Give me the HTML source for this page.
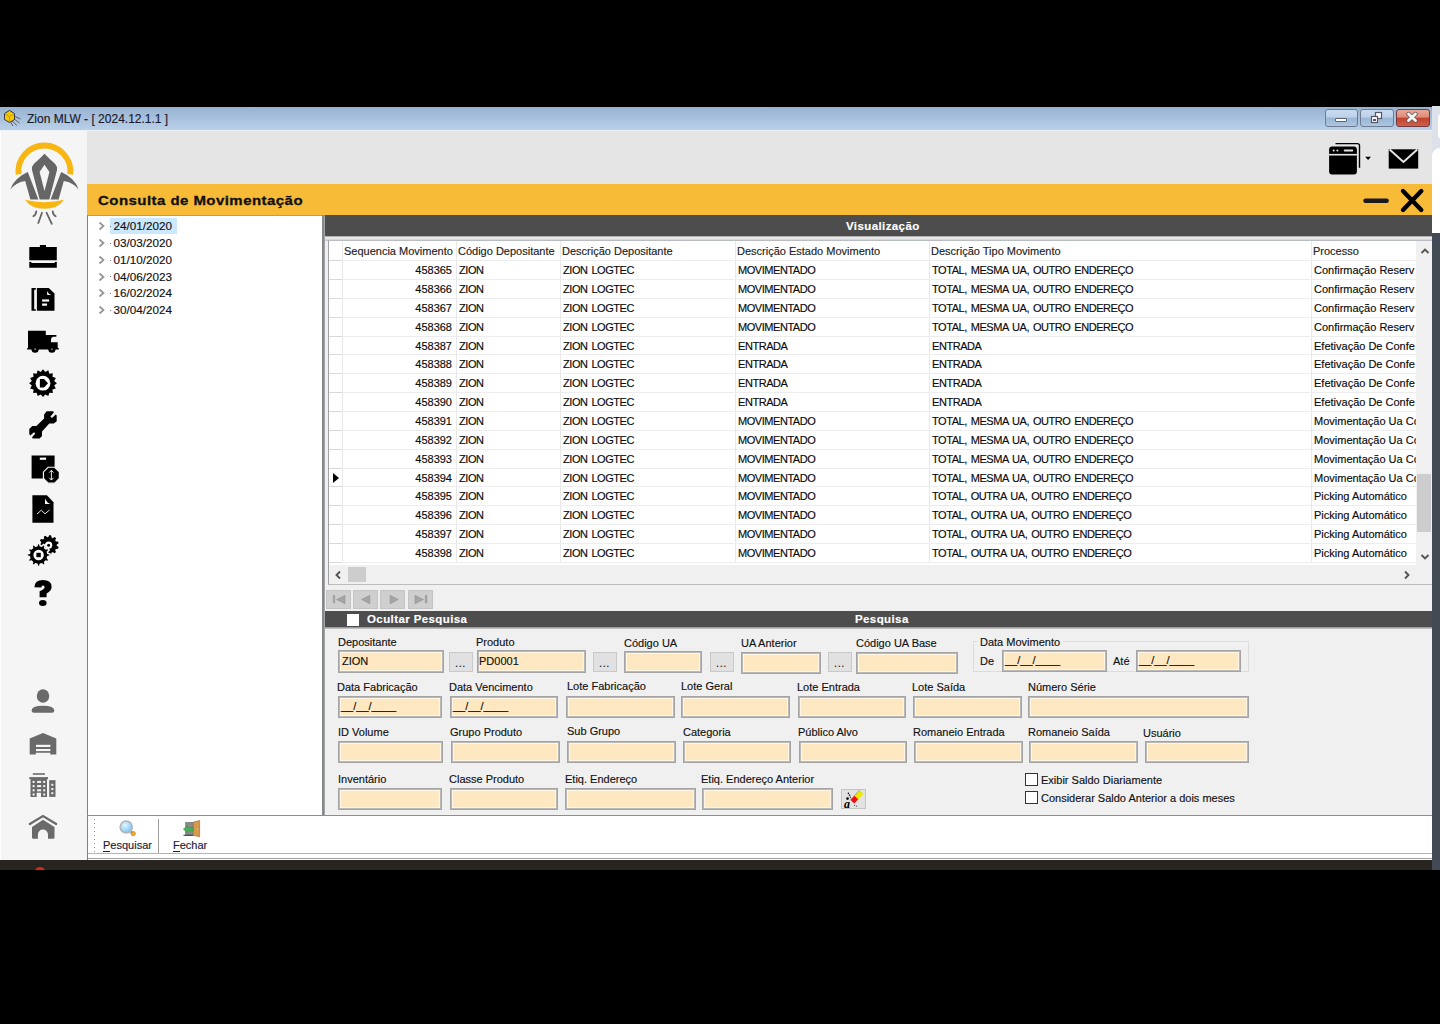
<!DOCTYPE html><html><head><meta charset="utf-8"><style>

*{margin:0;padding:0;box-sizing:border-box}
html,body{width:1440px;height:1024px;overflow:hidden;background:#000}
body{position:relative;font-family:"Liberation Sans", sans-serif;font-size:11px;color:#1e1e1e}
.ab{position:absolute}
.t{position:absolute;white-space:nowrap;line-height:13px;-webkit-text-stroke:0.15px currentColor}
.inp{position:absolute;background:#fde8c2;border:1px solid #a4a4a4;box-shadow:inset 0 0 0 1px #b9b9b9, inset 0 0 0 2px #fff6e6}
.btn{position:absolute;background:#e1e1e1;border:1px solid #c9c9c9;}
.dots{position:absolute;left:5px;top:6px;font-size:11px;letter-spacing:0.5px}
.mask{position:absolute;left:5px;top:4px;font-size:11px;letter-spacing:-0.6px;}
.hl{position:absolute;height:1px;background:#efefef}
.vl{position:absolute;width:1px;background:#e6e6e6}
.cell{position:absolute;white-space:nowrap;line-height:13px;color:#0a0a0a;-webkit-text-stroke:0.15px currentColor}
.up{letter-spacing:-0.45px;word-spacing:1.3px}

</style></head><body>
<div class="ab" style="left:0;top:107px;width:1432px;height:23px;background:linear-gradient(#97b2d2,#b9d0e8)"></div>
<div class="ab" style="left:0;top:130px;width:1432px;height:1px;background:#eef2f7"></div>
<div class="t" style="left:27px;top:112px;font-size:12px;line-height:15px;color:#1a1a2a">Zion MLW - [ 2024.12.1.1 ]</div>
<svg class="ab" style="left:2px;top:109px" width="20" height="18" viewBox="0 0 20 18"><path d="M12 7 L18.5 10 M11.5 9.5 L17.5 14 M9.5 11.5 L15 16.5 M8 12 L11 17" stroke="#555" stroke-width="0.9"/><path d="M2.5 4.5 L7.5 1.5 L12.5 4.5 L12.5 10.5 L7.5 13.5 L2.5 10.5Z" fill="#f6c800" stroke="#3a3a3a" stroke-width="1"/><path d="M2.5 4.5 L7.5 7.5 L12.5 4.5 M7.5 7.5 V13.5" stroke="#b08800" stroke-width="0.8" fill="none"/></svg>
<div class="ab" style="left:1325px;top:109px;width:33px;height:18px;background:linear-gradient(#c9dbef 0%,#bcd1ea 45%,#9ab6d3 50%,#adc6e2 100%);border:1px solid #6c7b92;border-radius:3px"></div>
<div class="ab" style="left:1360px;top:109px;width:34px;height:18px;background:linear-gradient(#c9dbef 0%,#bcd1ea 45%,#9ab6d3 50%,#adc6e2 100%);border:1px solid #6c7b92;border-radius:3px"></div>
<div class="ab" style="left:1396px;top:109px;width:34px;height:18px;background:linear-gradient(#e9a898 0%,#df8c78 45%,#c1432b 50%,#d0604a 100%);border:1px solid #703a40;border-radius:3px"></div>
<div class="ab" style="left:1335px;top:118px;width:12px;height:4px;background:#fff;border:1px solid #5b6472;border-radius:1px"></div>
<svg class="ab" style="left:1370px;top:111px" width="14" height="14" viewBox="0 0 14 14"><rect x="5.5" y="1.5" width="6" height="6" fill="#fff" stroke="#556" stroke-width="1.2"/><rect x="1.5" y="5.5" width="6" height="6" fill="#fff" stroke="#556" stroke-width="1.2"/><rect x="3" y="8" width="3" height="2" fill="#556"/></svg>
<svg class="ab" style="left:1405px;top:111px" width="14" height="12" viewBox="0 0 14 12"><path d="M3.5 3 L10.5 9.5 M10.5 3 L3.5 9.5" stroke="#6a5a5a" stroke-width="4.4" stroke-linecap="round"/><path d="M3.5 3 L10.5 9.5 M10.5 3 L3.5 9.5" stroke="#f4f4f4" stroke-width="2.8" stroke-linecap="round"/></svg>
<div class="ab" style="left:1432px;top:106px;width:8px;height:764px;background:#434a55"></div>
<div class="ab" style="left:1432px;top:106px;width:8px;height:127px;background:#dde2ea"></div>
<div class="ab" style="left:1437.5px;top:114px;width:6px;height:25px;background:#fff;border-radius:4px 0 0 4px"></div>
<div class="ab" style="left:1432px;top:148px;width:8px;height:85px;background:#fff;border-radius:8px 0 0 0"></div>
<div class="ab" style="left:0;top:131px;width:87px;height:729px;background:#f5f5f5"></div>
<div class="ab" style="left:0;top:131px;width:1px;height:729px;background:#ffffff"></div>
<div class="ab" style="left:87px;top:131px;width:1345px;height:53px;background:#e5e5e5"></div>
<div class="ab" style="left:87px;top:184px;width:1345px;height:31px;background:#f8bb37"></div>
<div class="t" style="left:98px;top:192px;font-size:15px;line-height:18px;font-weight:bold;color:#111;letter-spacing:0.45px;-webkit-text-stroke:0.35px #111;transform:scaleY(0.87);transform-origin:0 50%">Consulta de Movimentação</div>
<div class="ab" style="left:0;top:860px;width:1432px;height:10px;background:#28241f"></div>
<div class="ab" style="left:35px;top:867px;width:10px;height:8px;background:#d8281c;border-radius:50%"></div>
<div class="ab" style="left:0;top:870px;width:1432px;height:154px;background:#000"></div>
<div class="ab" style="left:87px;top:215px;width:235px;height:600px;background:#fff;border-left:1px solid #7b8089;border-top:1px solid #a0a0a0"></div>
<div class="ab" style="left:110px;top:218px;width:67px;height:16px;background:#cce8ff"></div>
<svg class="ab" style="left:97px;top:221px" width="9" height="10" viewBox="0 0 9 10"><path d="M2.5 1.5 L6.5 5 L2.5 8.5" fill="none" stroke="#959595" stroke-width="1.7"/></svg>
<div class="ab" style="left:110px;top:226px;width:1px;height:1px;background:#777"></div>
<div class="t" style="left:113.5px;top:219px;font-size:11.7px;color:#111">24/01/2020</div>
<svg class="ab" style="left:97px;top:238px" width="9" height="10" viewBox="0 0 9 10"><path d="M2.5 1.5 L6.5 5 L2.5 8.5" fill="none" stroke="#959595" stroke-width="1.7"/></svg>
<div class="ab" style="left:110px;top:243px;width:1px;height:1px;background:#777"></div>
<div class="t" style="left:113.5px;top:236px;font-size:11.7px;color:#111">03/03/2020</div>
<svg class="ab" style="left:97px;top:255px" width="9" height="10" viewBox="0 0 9 10"><path d="M2.5 1.5 L6.5 5 L2.5 8.5" fill="none" stroke="#959595" stroke-width="1.7"/></svg>
<div class="ab" style="left:110px;top:260px;width:1px;height:1px;background:#777"></div>
<div class="t" style="left:113.5px;top:253px;font-size:11.7px;color:#111">01/10/2020</div>
<svg class="ab" style="left:97px;top:272px" width="9" height="10" viewBox="0 0 9 10"><path d="M2.5 1.5 L6.5 5 L2.5 8.5" fill="none" stroke="#959595" stroke-width="1.7"/></svg>
<div class="ab" style="left:110px;top:276px;width:1px;height:1px;background:#777"></div>
<div class="t" style="left:113.5px;top:270px;font-size:11.7px;color:#111">04/06/2023</div>
<svg class="ab" style="left:97px;top:288px" width="9" height="10" viewBox="0 0 9 10"><path d="M2.5 1.5 L6.5 5 L2.5 8.5" fill="none" stroke="#959595" stroke-width="1.7"/></svg>
<div class="ab" style="left:110px;top:293px;width:1px;height:1px;background:#777"></div>
<div class="t" style="left:113.5px;top:286px;font-size:11.7px;color:#111">16/02/2024</div>
<svg class="ab" style="left:97px;top:305px" width="9" height="10" viewBox="0 0 9 10"><path d="M2.5 1.5 L6.5 5 L2.5 8.5" fill="none" stroke="#959595" stroke-width="1.7"/></svg>
<div class="ab" style="left:110px;top:310px;width:1px;height:1px;background:#777"></div>
<div class="t" style="left:113.5px;top:303px;font-size:11.7px;color:#111">30/04/2024</div>
<div class="ab" style="left:322px;top:215px;width:2px;height:600px;background:#86888c"></div>
<div class="ab" style="left:324px;top:215px;width:1px;height:600px;background:#a3a5a8"></div>
<div class="ab" style="left:325px;top:215px;width:1107px;height:600px;background:#f0f0f0"></div>
<div class="ab" style="left:325px;top:215px;width:1107px;height:21px;background:#4d4d4d"></div>
<div class="t" style="left:846px;top:220px;font-weight:bold;color:#fff;font-size:11.5px;letter-spacing:0.4px">Visualização</div>
<div class="ab" style="left:325px;top:236px;width:1107px;height:375px;background:#f0f0f0"></div>
<div class="ab" style="left:325px;top:236px;width:1107px;height:5px;background:linear-gradient(#8c8c8c 0px,#e6e6e6 1.2px,#ececec 2px,#d6d8dc 3.5px,#c4c8cc 4.5px,#c4c8cc 5px)"></div>
<div class="ab" style="left:328px;top:240px;width:1104px;height:345px;background:#fff;border:1px solid #b9bcc0;border-left-color:#9fa2a6;border-right:none"></div>
<div class="ab" style="left:1416px;top:241px;width:16px;height:324px;background:#f0f0f0"></div>
<div class="ab" style="left:1417px;top:474px;width:14px;height:58px;background:#cdcdcd"></div>
<svg class="ab" style="left:1420px;top:247px" width="10" height="8" viewBox="0 0 10 8"><path d="M1.5 6 L5 2.5 L8.5 6" fill="none" stroke="#555" stroke-width="1.9"/></svg>
<svg class="ab" style="left:1420px;top:553px" width="10" height="8" viewBox="0 0 10 8"><path d="M1.5 2 L5 5.5 L8.5 2" fill="none" stroke="#555" stroke-width="1.9"/></svg>
<div class="ab" style="left:329px;top:565px;width:1103px;height:19px;background:#f0f0f0"></div>
<div class="ab" style="left:348px;top:567px;width:18px;height:15px;background:#cdcdcd"></div>
<svg class="ab" style="left:334px;top:570px" width="8" height="10" viewBox="0 0 8 10"><path d="M6 1.5 L2.5 5 L6 8.5" fill="none" stroke="#555" stroke-width="1.9"/></svg>
<svg class="ab" style="left:1403px;top:570px" width="8" height="10" viewBox="0 0 8 10"><path d="M2 1.5 L5.5 5 L2 8.5" fill="none" stroke="#555" stroke-width="1.9"/></svg>
<div class="vl" style="left:342px;top:241px;height:321px;background:#e8e8e8"></div>
<div class="vl" style="left:456px;top:241px;height:321px;background:#e8e8e8"></div>
<div class="vl" style="left:560px;top:241px;height:321px;background:#e8e8e8"></div>
<div class="vl" style="left:735px;top:241px;height:321px;background:#e8e8e8"></div>
<div class="vl" style="left:929px;top:241px;height:321px;background:#e8e8e8"></div>
<div class="vl" style="left:1311px;top:241px;height:321px;background:#e8e8e8"></div>
<div class="t" style="left:344px;top:245px;color:#222">Sequencia Movimento</div>
<div class="t" style="left:458px;top:245px;color:#222">Código Depositante</div>
<div class="t" style="left:562px;top:245px;color:#222">Descrição Depositante</div>
<div class="t" style="left:737px;top:245px;color:#222">Descrição Estado Movimento</div>
<div class="t" style="left:931px;top:245px;color:#222">Descrição Tipo Movimento</div>
<div class="t" style="left:1313px;top:245px;color:#222">Processo</div>
<div class="hl" style="left:343px;top:260px;width:1073px;background:#ededed"></div>
<div class="hl" style="left:329px;top:260px;width:13px;background:#d9d9d9"></div>
<div class="hl" style="left:343px;top:279px;width:1073px;background:#ededed"></div>
<div class="hl" style="left:329px;top:279px;width:13px;background:#d9d9d9"></div>
<div class="hl" style="left:343px;top:298px;width:1073px;background:#ededed"></div>
<div class="hl" style="left:329px;top:298px;width:13px;background:#d9d9d9"></div>
<div class="hl" style="left:343px;top:317px;width:1073px;background:#ededed"></div>
<div class="hl" style="left:329px;top:317px;width:13px;background:#d9d9d9"></div>
<div class="hl" style="left:343px;top:336px;width:1073px;background:#ededed"></div>
<div class="hl" style="left:329px;top:336px;width:13px;background:#d9d9d9"></div>
<div class="hl" style="left:343px;top:354px;width:1073px;background:#ededed"></div>
<div class="hl" style="left:329px;top:354px;width:13px;background:#d9d9d9"></div>
<div class="hl" style="left:343px;top:373px;width:1073px;background:#ededed"></div>
<div class="hl" style="left:329px;top:373px;width:13px;background:#d9d9d9"></div>
<div class="hl" style="left:343px;top:392px;width:1073px;background:#ededed"></div>
<div class="hl" style="left:329px;top:392px;width:13px;background:#d9d9d9"></div>
<div class="hl" style="left:343px;top:411px;width:1073px;background:#ededed"></div>
<div class="hl" style="left:329px;top:411px;width:13px;background:#d9d9d9"></div>
<div class="hl" style="left:343px;top:430px;width:1073px;background:#ededed"></div>
<div class="hl" style="left:329px;top:430px;width:13px;background:#d9d9d9"></div>
<div class="hl" style="left:343px;top:449px;width:1073px;background:#ededed"></div>
<div class="hl" style="left:329px;top:449px;width:13px;background:#d9d9d9"></div>
<div class="hl" style="left:343px;top:468px;width:1073px;background:#ededed"></div>
<div class="hl" style="left:329px;top:468px;width:13px;background:#d9d9d9"></div>
<div class="hl" style="left:343px;top:486px;width:1073px;background:#ededed"></div>
<div class="hl" style="left:329px;top:486px;width:13px;background:#d9d9d9"></div>
<div class="hl" style="left:343px;top:505px;width:1073px;background:#ededed"></div>
<div class="hl" style="left:329px;top:505px;width:13px;background:#d9d9d9"></div>
<div class="hl" style="left:343px;top:524px;width:1073px;background:#ededed"></div>
<div class="hl" style="left:329px;top:524px;width:13px;background:#d9d9d9"></div>
<div class="hl" style="left:343px;top:543px;width:1073px;background:#ededed"></div>
<div class="hl" style="left:329px;top:543px;width:13px;background:#d9d9d9"></div>
<div class="hl" style="left:343px;top:562px;width:1073px;background:#ededed"></div>
<div class="hl" style="left:329px;top:562px;width:13px;background:#d9d9d9"></div>
<div class="ab" style="left:1312px;top:261px;width:104px;height:301px;overflow:hidden">
<div class="cell" style="left:2px;top:3px">Confirmação Reserv</div>
<div class="cell" style="left:2px;top:22px">Confirmação Reserv</div>
<div class="cell" style="left:2px;top:41px">Confirmação Reserv</div>
<div class="cell" style="left:2px;top:60px">Confirmação Reserv</div>
<div class="cell" style="left:2px;top:79px">Efetivação De Confe</div>
<div class="cell" style="left:2px;top:97px">Efetivação De Confe</div>
<div class="cell" style="left:2px;top:116px">Efetivação De Confe</div>
<div class="cell" style="left:2px;top:135px">Efetivação De Confe</div>
<div class="cell" style="left:2px;top:154px">Movimentação Ua Co</div>
<div class="cell" style="left:2px;top:173px">Movimentação Ua Co</div>
<div class="cell" style="left:2px;top:192px">Movimentação Ua Co</div>
<div class="cell" style="left:2px;top:211px">Movimentação Ua Co</div>
<div class="cell" style="left:2px;top:229px">Picking Automático</div>
<div class="cell" style="left:2px;top:248px">Picking Automático</div>
<div class="cell" style="left:2px;top:267px">Picking Automático</div>
<div class="cell" style="left:2px;top:286px">Picking Automático</div>
</div>
<div class="cell" style="left:400px;width:52px;text-align:right;top:264px">458365</div>
<div class="cell up" style="left:459px;top:264px">ZION</div>
<div class="cell up" style="left:563px;top:264px">ZION LOGTEC</div>
<div class="cell up" style="left:738px;top:264px">MOVIMENTADO</div>
<div class="cell up" style="left:932px;top:264px">TOTAL, MESMA UA, OUTRO ENDEREÇO</div>
<div class="cell" style="left:400px;width:52px;text-align:right;top:283px">458366</div>
<div class="cell up" style="left:459px;top:283px">ZION</div>
<div class="cell up" style="left:563px;top:283px">ZION LOGTEC</div>
<div class="cell up" style="left:738px;top:283px">MOVIMENTADO</div>
<div class="cell up" style="left:932px;top:283px">TOTAL, MESMA UA, OUTRO ENDEREÇO</div>
<div class="cell" style="left:400px;width:52px;text-align:right;top:302px">458367</div>
<div class="cell up" style="left:459px;top:302px">ZION</div>
<div class="cell up" style="left:563px;top:302px">ZION LOGTEC</div>
<div class="cell up" style="left:738px;top:302px">MOVIMENTADO</div>
<div class="cell up" style="left:932px;top:302px">TOTAL, MESMA UA, OUTRO ENDEREÇO</div>
<div class="cell" style="left:400px;width:52px;text-align:right;top:321px">458368</div>
<div class="cell up" style="left:459px;top:321px">ZION</div>
<div class="cell up" style="left:563px;top:321px">ZION LOGTEC</div>
<div class="cell up" style="left:738px;top:321px">MOVIMENTADO</div>
<div class="cell up" style="left:932px;top:321px">TOTAL, MESMA UA, OUTRO ENDEREÇO</div>
<div class="cell" style="left:400px;width:52px;text-align:right;top:340px">458387</div>
<div class="cell up" style="left:459px;top:340px">ZION</div>
<div class="cell up" style="left:563px;top:340px">ZION LOGTEC</div>
<div class="cell up" style="left:738px;top:340px">ENTRADA</div>
<div class="cell up" style="left:932px;top:340px">ENTRADA</div>
<div class="cell" style="left:400px;width:52px;text-align:right;top:358px">458388</div>
<div class="cell up" style="left:459px;top:358px">ZION</div>
<div class="cell up" style="left:563px;top:358px">ZION LOGTEC</div>
<div class="cell up" style="left:738px;top:358px">ENTRADA</div>
<div class="cell up" style="left:932px;top:358px">ENTRADA</div>
<div class="cell" style="left:400px;width:52px;text-align:right;top:377px">458389</div>
<div class="cell up" style="left:459px;top:377px">ZION</div>
<div class="cell up" style="left:563px;top:377px">ZION LOGTEC</div>
<div class="cell up" style="left:738px;top:377px">ENTRADA</div>
<div class="cell up" style="left:932px;top:377px">ENTRADA</div>
<div class="cell" style="left:400px;width:52px;text-align:right;top:396px">458390</div>
<div class="cell up" style="left:459px;top:396px">ZION</div>
<div class="cell up" style="left:563px;top:396px">ZION LOGTEC</div>
<div class="cell up" style="left:738px;top:396px">ENTRADA</div>
<div class="cell up" style="left:932px;top:396px">ENTRADA</div>
<div class="cell" style="left:400px;width:52px;text-align:right;top:415px">458391</div>
<div class="cell up" style="left:459px;top:415px">ZION</div>
<div class="cell up" style="left:563px;top:415px">ZION LOGTEC</div>
<div class="cell up" style="left:738px;top:415px">MOVIMENTADO</div>
<div class="cell up" style="left:932px;top:415px">TOTAL, MESMA UA, OUTRO ENDEREÇO</div>
<div class="cell" style="left:400px;width:52px;text-align:right;top:434px">458392</div>
<div class="cell up" style="left:459px;top:434px">ZION</div>
<div class="cell up" style="left:563px;top:434px">ZION LOGTEC</div>
<div class="cell up" style="left:738px;top:434px">MOVIMENTADO</div>
<div class="cell up" style="left:932px;top:434px">TOTAL, MESMA UA, OUTRO ENDEREÇO</div>
<div class="cell" style="left:400px;width:52px;text-align:right;top:453px">458393</div>
<div class="cell up" style="left:459px;top:453px">ZION</div>
<div class="cell up" style="left:563px;top:453px">ZION LOGTEC</div>
<div class="cell up" style="left:738px;top:453px">MOVIMENTADO</div>
<div class="cell up" style="left:932px;top:453px">TOTAL, MESMA UA, OUTRO ENDEREÇO</div>
<div class="cell" style="left:400px;width:52px;text-align:right;top:472px">458394</div>
<div class="cell up" style="left:459px;top:472px">ZION</div>
<div class="cell up" style="left:563px;top:472px">ZION LOGTEC</div>
<div class="cell up" style="left:738px;top:472px">MOVIMENTADO</div>
<div class="cell up" style="left:932px;top:472px">TOTAL, MESMA UA, OUTRO ENDEREÇO</div>
<div class="cell" style="left:400px;width:52px;text-align:right;top:490px">458395</div>
<div class="cell up" style="left:459px;top:490px">ZION</div>
<div class="cell up" style="left:563px;top:490px">ZION LOGTEC</div>
<div class="cell up" style="left:738px;top:490px">MOVIMENTADO</div>
<div class="cell up" style="left:932px;top:490px">TOTAL, OUTRA UA, OUTRO ENDEREÇO</div>
<div class="cell" style="left:400px;width:52px;text-align:right;top:509px">458396</div>
<div class="cell up" style="left:459px;top:509px">ZION</div>
<div class="cell up" style="left:563px;top:509px">ZION LOGTEC</div>
<div class="cell up" style="left:738px;top:509px">MOVIMENTADO</div>
<div class="cell up" style="left:932px;top:509px">TOTAL, OUTRA UA, OUTRO ENDEREÇO</div>
<div class="cell" style="left:400px;width:52px;text-align:right;top:528px">458397</div>
<div class="cell up" style="left:459px;top:528px">ZION</div>
<div class="cell up" style="left:563px;top:528px">ZION LOGTEC</div>
<div class="cell up" style="left:738px;top:528px">MOVIMENTADO</div>
<div class="cell up" style="left:932px;top:528px">TOTAL, OUTRA UA, OUTRO ENDEREÇO</div>
<div class="cell" style="left:400px;width:52px;text-align:right;top:547px">458398</div>
<div class="cell up" style="left:459px;top:547px">ZION</div>
<div class="cell up" style="left:563px;top:547px">ZION LOGTEC</div>
<div class="cell up" style="left:738px;top:547px">MOVIMENTADO</div>
<div class="cell up" style="left:932px;top:547px">TOTAL, OUTRA UA, OUTRO ENDEREÇO</div>
<svg class="ab" style="left:332px;top:471.5px" width="8" height="12" viewBox="0 0 8 12"><path d="M1 1 L7 6 L1 11Z" fill="#000"/></svg>
<div class="ab" style="left:326px;top:590px;width:25px;height:19px;background:#cfcfcf;border:1px solid #c4c4c4"></div>
<div class="ab" style="left:353px;top:590px;width:25px;height:19px;background:#cfcfcf;border:1px solid #c4c4c4"></div>
<div class="ab" style="left:380px;top:590px;width:25px;height:19px;background:#cfcfcf;border:1px solid #c4c4c4"></div>
<div class="ab" style="left:408px;top:590px;width:25px;height:19px;background:#cfcfcf;border:1px solid #c4c4c4"></div>
<svg class="ab" style="left:326px;top:590px" width="110" height="19" viewBox="326 590 110 19"><g fill="#a4a4a4" stroke="#959595" stroke-width="0.6" stroke-linejoin="round"><rect x="333.3" y="595.3" width="1.4" height="7.6"/><path d="M336.5 599.4 L345 595.3 V603.8Z"/><path d="M361.5 599.4 L369.9 595.3 V603.8Z"/><path d="M390.1 595.3 V603.8 L398.3 599.5Z"/><path d="M415 595.3 V603.8 L423.5 599.5Z"/><rect x="425.3" y="595.3" width="1.6" height="7.6"/></g></svg>
<div class="ab" style="left:325px;top:611px;width:1107px;height:16px;background:#4d4d4d"></div>
<div class="ab" style="left:325px;top:627px;width:1107px;height:3px;background:linear-gradient(#8a8a8a,#f0f0f0)"></div>
<div class="ab" style="left:347px;top:614px;width:12px;height:12px;background:#fff"></div>
<div class="t" style="left:367px;top:613px;font-weight:bold;color:#fff;font-size:11.5px;letter-spacing:0.4px">Ocultar Pesquisa</div>
<div class="t" style="left:855px;top:613px;font-weight:bold;color:#fff;font-size:11.5px;letter-spacing:0.4px">Pesquisa</div>
<div class="ab" style="left:325px;top:629px;width:1107px;height:186px;background:#f0f0f0"></div>
<div class="t" style="left:338px;top:636px;color:#111">Depositante</div>
<div class="inp" style="left:338px;top:650px;width:106px;height:23px"><div class="t" style="left:3px;top:4px;color:#111">ZION</div></div>
<div class="btn" style="left:449px;top:652px;width:24px;height:20px"><div class="t" style="left:5px;top:4px;color:#222;letter-spacing:0.6px">...</div></div>
<div class="t" style="left:476px;top:636px;color:#111">Produto</div>
<div class="inp" style="left:477px;top:650px;width:109px;height:23px"><div class="t" style="left:1px;top:4px;color:#111">PD0001</div></div>
<div class="btn" style="left:593px;top:652px;width:24px;height:20px"><div class="t" style="left:5px;top:4px;color:#222;letter-spacing:0.6px">...</div></div>
<div class="t" style="left:624px;top:637px;color:#111">Código UA</div>
<div class="inp" style="left:624px;top:651px;width:78px;height:22px"></div>
<div class="btn" style="left:710px;top:652px;width:24px;height:20px"><div class="t" style="left:5px;top:4px;color:#222;letter-spacing:0.6px">...</div></div>
<div class="t" style="left:741px;top:637px;color:#111">UA Anterior</div>
<div class="inp" style="left:741px;top:652px;width:80px;height:22px"></div>
<div class="btn" style="left:828px;top:652px;width:24px;height:20px"><div class="t" style="left:5px;top:4px;color:#222;letter-spacing:0.6px">...</div></div>
<div class="t" style="left:856px;top:637px;color:#111">Código UA Base</div>
<div class="inp" style="left:856px;top:652px;width:102px;height:22px"></div>
<div class="ab" style="left:973px;top:641px;width:276px;height:31px;border:1px solid #dcdcdc"></div>
<div class="ab" style="left:977px;top:636px;width:86px;height:12px;background:#f0f0f0"></div>
<div class="t" style="left:980px;top:636px;color:#111">Data Movimento</div>
<div class="t" style="left:980px;top:655px;color:#111">De</div>
<div class="inp" style="left:1002px;top:650px;width:105px;height:22px"><div class="t" style="left:2px;top:3px;color:#111;letter-spacing:0px">__/__/____</div></div>
<div class="t" style="left:1113px;top:655px;color:#111">Até</div>
<div class="inp" style="left:1136px;top:650px;width:105px;height:22px"><div class="t" style="left:2px;top:3px;color:#111;letter-spacing:0px">__/__/____</div></div>
<div class="t" style="left:337px;top:681px;color:#111">Data Fabricação</div>
<div class="inp" style="left:338px;top:696px;width:104px;height:22px"><div class="t" style="left:2px;top:3px;color:#111;letter-spacing:0px">__/__/____</div></div>
<div class="t" style="left:449px;top:681px;color:#111">Data Vencimento</div>
<div class="inp" style="left:450px;top:696px;width:108px;height:22px"><div class="t" style="left:2px;top:3px;color:#111;letter-spacing:0px">__/__/____</div></div>
<div class="t" style="left:567px;top:680px;color:#111">Lote Fabricação</div>
<div class="inp" style="left:566px;top:696px;width:109px;height:22px"></div>
<div class="t" style="left:681px;top:680px;color:#111">Lote Geral</div>
<div class="inp" style="left:681px;top:696px;width:109px;height:22px"></div>
<div class="t" style="left:797px;top:681px;color:#111">Lote Entrada</div>
<div class="inp" style="left:798px;top:696px;width:108px;height:22px"></div>
<div class="t" style="left:912px;top:681px;color:#111">Lote Saída</div>
<div class="inp" style="left:913px;top:696px;width:109px;height:22px"></div>
<div class="t" style="left:1028px;top:681px;color:#111">Número Série</div>
<div class="inp" style="left:1028px;top:696px;width:221px;height:22px"></div>
<div class="t" style="left:338px;top:726px;color:#111">ID Volume</div>
<div class="inp" style="left:338px;top:741px;width:105px;height:22px"></div>
<div class="t" style="left:450px;top:726px;color:#111">Grupo Produto</div>
<div class="inp" style="left:451px;top:741px;width:109px;height:22px"></div>
<div class="t" style="left:567px;top:725px;color:#111">Sub Grupo</div>
<div class="inp" style="left:567px;top:741px;width:109px;height:22px"></div>
<div class="t" style="left:683px;top:726px;color:#111">Categoria</div>
<div class="inp" style="left:683px;top:741px;width:108px;height:22px"></div>
<div class="t" style="left:798px;top:726px;color:#111">Público Alvo</div>
<div class="inp" style="left:799px;top:741px;width:108px;height:22px"></div>
<div class="t" style="left:913px;top:726px;color:#111">Romaneio Entrada</div>
<div class="inp" style="left:914px;top:741px;width:109px;height:22px"></div>
<div class="t" style="left:1028px;top:726px;color:#111">Romaneio Saída</div>
<div class="inp" style="left:1029px;top:741px;width:109px;height:22px"></div>
<div class="t" style="left:1143px;top:727px;color:#111">Usuário</div>
<div class="inp" style="left:1145px;top:741px;width:104px;height:22px"></div>
<div class="t" style="left:338px;top:773px;color:#111">Inventário</div>
<div class="inp" style="left:338px;top:788px;width:104px;height:22px"></div>
<div class="t" style="left:449px;top:773px;color:#111">Classe Produto</div>
<div class="inp" style="left:450px;top:788px;width:108px;height:22px"></div>
<div class="t" style="left:565px;top:773px;color:#111">Etiq. Endereço</div>
<div class="inp" style="left:565px;top:788px;width:131px;height:22px"></div>
<div class="t" style="left:701px;top:773px;color:#111">Etiq. Endereço Anterior</div>
<div class="inp" style="left:702px;top:788px;width:131px;height:22px"></div>
<div class="btn" style="left:841px;top:789px;width:25px;height:20px;background:#e3e3e3;border-color:#c4c4c4"></div>
<svg class="ab" style="left:841px;top:789px" width="25" height="20" viewBox="841 789 25 20"><path d="M852.3 801.8 L856.6 797.3" stroke="#ee1010" stroke-width="5.2"/><path d="M856.4 797.5 L861.6 792" stroke="#e8e800" stroke-width="5.2"/><path d="M850 800 L859.5 790.2" stroke="#f4f4ff" stroke-width="0.9"/><path d="M850.2 799.8 L859.7 790" stroke="#4a4a80" stroke-width="0.5"/><text x="844" y="807.6" font-family="Liberation Serif" font-style="italic" font-weight="bold" font-size="12" fill="#000">a</text><circle cx="847.5" cy="798.6" r="1.3" fill="#000"/><circle cx="848.4" cy="793.4" r="0.8" fill="#111"/><circle cx="849.5" cy="795.2" r="0.8" fill="#111"/><circle cx="850.4" cy="797.2" r="0.7" fill="#333"/><circle cx="854.6" cy="805.4" r="0.6" fill="#555"/><circle cx="856.6" cy="806.2" r="0.6" fill="#555"/></svg>
<div class="ab" style="left:1025px;top:773px;width:13px;height:13px;background:#fff;border:1px solid #333"></div>
<div class="t" style="left:1041px;top:774px;color:#111">Exibir Saldo Diariamente</div>
<div class="ab" style="left:1025px;top:791px;width:13px;height:13px;background:#fff;border:1px solid #333"></div>
<div class="t" style="left:1041px;top:792px;color:#111">Considerar Saldo Anterior a dois meses</div>
<div class="ab" style="left:87px;top:815px;width:1345px;height:45px;background:#fff;border-left:1px solid #7b8089"></div>
<div class="ab" style="left:87px;top:815px;width:1345px;height:1px;background:#8a8d92"></div>
<div class="ab" style="left:88px;top:853px;width:1344px;height:1px;background:#b4b4b4"></div>
<div class="ab" style="left:88px;top:858px;width:1344px;height:1px;background:#a0a0a0"></div>
<div class="ab" style="left:94px;top:819px;width:1px;height:1px;background:#999"></div>
<div class="ab" style="left:94px;top:823px;width:1px;height:1px;background:#999"></div>
<div class="ab" style="left:94px;top:827px;width:1px;height:1px;background:#999"></div>
<div class="ab" style="left:94px;top:831px;width:1px;height:1px;background:#999"></div>
<div class="ab" style="left:94px;top:835px;width:1px;height:1px;background:#999"></div>
<div class="ab" style="left:94px;top:839px;width:1px;height:1px;background:#999"></div>
<div class="ab" style="left:94px;top:843px;width:1px;height:1px;background:#999"></div>
<div class="ab" style="left:94px;top:847px;width:1px;height:1px;background:#999"></div>
<div class="ab" style="left:94px;top:851px;width:1px;height:1px;background:#999"></div>
<div class="ab" style="left:158px;top:819px;width:1px;height:34px;background:#a0a0a0"></div>
<div class="t" style="left:103px;top:839px;color:#1a1a3a">Pesquisar</div>
<div class="ab" style="left:103px;top:851px;width:7px;height:1px;background:#222"></div>
<div class="t" style="left:173px;top:839px;color:#1a1a3a">Fechar</div>
<div class="ab" style="left:173px;top:851px;width:7px;height:1px;background:#222"></div>
<svg class="ab" style="left:115px;top:817px" width="22" height="22" viewBox="115 817 22 22"><defs><radialGradient id="lens" cx="0.4" cy="0.35" r="0.7"><stop offset="0" stop-color="#e4f6ff"/><stop offset="0.6" stop-color="#9fd6f8"/><stop offset="1" stop-color="#7cc0ec"/></radialGradient></defs><path d="M130.5 831.3 L133.5 834.2" stroke="#9aa4b0" stroke-width="2.4"/><circle cx="133.2" cy="833.6" r="2.2" fill="#f0a830" stroke="#c07818" stroke-width="0.6"/><circle cx="126.2" cy="827" r="6.1" fill="url(#lens)" stroke="#b4b4b4" stroke-width="1.5"/></svg>
<svg class="ab" style="left:182px;top:819px" width="20" height="19" viewBox="182 819 20 19"><rect x="185.7" y="822.3" width="7.8" height="12.8" fill="#8c8c8c" stroke="#6a6a6a" stroke-width="0.6"/><path d="M183.5 835.3 H193.5" stroke="#333" stroke-width="1"/><path d="M193.2 822.2 L199.6 820.5 V836.8 L193.2 835.2Z" fill="#d49a50" stroke="#a8702a" stroke-width="0.7"/><circle cx="197.5" cy="829" r="0.6" fill="#f8e070"/><path d="M183.3 829.2 L187.6 825.3 V827.4 H193 V831 H187.6 V833.1Z" fill="#4cae56" stroke="#2e8a3a" stroke-width="0.4"/></svg>
<svg class="ab" style="left:0;top:131px" width="87" height="729" viewBox="0 131 87 729">
<path d="M18.56 174.4 A26 26 0 1 1 70.24 174.4" fill="none" stroke="#f7b614" stroke-width="5.8"/>
<path d="M44.5 153.8 Q50 159.5 55.2 164 Q57.6 166.5 57 170 L49.3 199.5 L39.7 199.5 L32 170 Q31.4 166.5 33.8 164 Q39 159.5 44.5 153.8Z M44.5 164.8 L39.6 172 L44.5 191 L49.4 172Z" fill="#666" fill-rule="evenodd"/>
<path d="M10.3 189.5 Q14 178 27.8 172 L38.4 199.5 L30.4 199.5 L25.2 181 Q15.5 182.5 10.3 189.5Z" fill="#666"/>
<path d="M78.7 189.5 Q75 178 61.2 172 L50.6 199.5 L58.6 199.5 L63.8 181 Q73.5 182.5 78.7 189.5Z" fill="#666"/>
<path d="M24.9 199.8 Q44.5 204.5 64 199.8 Q58 208.8 44.5 208.8 Q31 208.8 24.9 199.8Z" fill="#f7b614"/>
<g stroke="#666" stroke-width="1.8" fill="none" stroke-linecap="round"><path d="M36.3 211.3 Q35.8 215 33.3 216.2"/><path d="M52.7 211.3 Q53.2 215 55.7 216.2"/><path d="M42 212.8 L38.3 223"/><path d="M46.6 212.8 L51.8 223.8"/></g>
<path d="M39.9 245 H46 V247 H56.8 V260.3 H29.3 V247 H39.9Z M29.3 261.9 Q30.8 261.4 31.8 262.9 H54.3 Q55.3 261.4 56.8 261.9 V267.8 H29.3Z" fill="#000"/>
<path d="M31.5 288.1 H35.8 V289.7 H34.2 V309.2 H35.8 V310.7 H31.5Z" fill="#000"/>
<path d="M36.9 288.1 H48.8 L54.5 293.4 V310.7 H36.9Z" fill="#000"/>
<path d="M47.1 291 Q48.5 294.5 51.5 295.1 L47.4 295 Q47 294 47.1 291Z" fill="#fff"/>
<rect x="42.1" y="299.4" width="7" height="2.2" fill="#fff"/><rect x="42.1" y="303.5" width="5" height="2.2" fill="#fff"/>
<path d="M28 330.8 H45.8 V335.1 H55.7 Q56.6 335.1 56.6 336 Q56.6 336.8 55.7 336.8 H53 Q51 337.3 51 339.6 V342.3 H57.7 V347.7 L58.9 348.6 V349.6 H27.1 V348.6 L28 347.7Z" fill="#000"/>
<circle cx="35.1" cy="349.2" r="3.6" fill="#000"/><circle cx="51.9" cy="349.2" r="3.6" fill="#000"/>
<circle cx="35.1" cy="349.2" r="0.9" fill="#888"/><circle cx="51.9" cy="349.2" r="0.9" fill="#888"/>
<path d="M43.00 369.30 L45.22 372.02 L48.32 370.36 L49.33 373.72 L52.83 373.37 L52.48 376.87 L55.84 377.88 L54.18 380.98 L56.90 383.20 L54.18 385.42 L55.84 388.52 L52.48 389.53 L52.83 393.03 L49.33 392.68 L48.32 396.04 L45.22 394.38 L43.00 397.10 L40.78 394.38 L37.68 396.04 L36.67 392.68 L33.17 393.03 L33.52 389.53 L30.16 388.52 L31.82 385.42 L29.10 383.20 L31.82 380.98 L30.16 377.88 L33.52 376.87 L33.17 373.37 L36.67 373.72 L37.68 370.36 L40.78 372.02Z" fill="#000"/>
<circle cx="43" cy="383.2" r="7.4" fill="#fff"/><circle cx="43" cy="383.2" r="5.9" fill="none" stroke="#000" stroke-width="0"/>
<path d="M39.9 378.9 H44 L48 383.2 L44 387.4 H39.9Z" fill="#000"/>
<path d="M46.6 411.3 H53.2 L53.8 412.6 L50.4 416.6 L51.9 418 L55.8 414.6 L56.7 415.6 V421.3 L53.9 423.6 H49.3 L42 431.4 V435.9 L39.6 438.6 H32.6 L32.1 437.3 L35.3 433.5 L34 432.3 L30.3 435.4 L29.3 434.2 V428.9 L32.3 426.1 H36.4 L44.1 418.6 V414.5Z" fill="#000"/>
<rect x="31.6" y="455.5" width="23" height="23" fill="#000"/>
<rect x="39.8" y="457.6" width="6.3" height="2.2" fill="#fff"/>
<path d="M59.35 478.49 L54.69 483.15 L48.11 483.15 L43.45 478.49 L43.45 471.91 L48.11 467.25 L54.69 467.25 L59.35 471.91Z" fill="#000" stroke="#f5f5f5" stroke-width="1.2"/>
<path d="M51.4 470.5 V480 M49.3 472.6 L51.4 470.3 L53.5 472.6 M49.3 477.8 L51.4 480.1 L53.5 477.8" fill="none" stroke="#fff" stroke-width="0.9"/>
<path d="M32.4 495.3 H46.9 L53.5 502.3 V522.7 H32.4Z" fill="#000"/>
<path d="M45 498.2 Q46.5 502.8 50.6 503.9 H45Z" fill="#fff"/>
<path d="M37 514 L41.3 510.2 L45 513.8 L49.5 510" fill="none" stroke="#fff" stroke-width="0.9"/>
<path d="M49.39 535.12 L51.19 535.39 L51.54 537.58 L52.78 538.16 L54.69 537.02 L56.06 538.22 L55.17 540.26 L55.90 541.42 L58.12 541.49 L58.63 543.24 L56.78 544.47 L56.77 545.84 L58.60 547.10 L58.07 548.85 L55.85 548.88 L55.10 550.03 L55.96 552.08 L54.57 553.27 L52.68 552.09 L51.43 552.65 L51.05 554.84 L49.24 555.09 L48.29 553.08 L46.93 552.88 L45.43 554.51 L43.77 553.74 L44.05 551.54 L43.02 550.63 L40.87 551.19 L39.90 549.65 L41.32 547.95 L40.95 546.63 L38.84 545.94 L38.85 544.12 L40.97 543.45 L41.37 542.14 L39.96 540.42 L40.96 538.89 L43.10 539.48 L44.14 538.59 L43.90 536.39 L45.56 535.64 L47.04 537.30 L48.40 537.11Z" fill="#000"/>
<circle cx="48.6" cy="545.2" r="3.6" fill="#fff"/><circle cx="48.6" cy="545.2" r="1.5" fill="#000"/>
<path d="M37.63 543.44 L39.57 543.44 L40.31 545.76 L41.74 546.14 L43.54 544.50 L45.22 545.47 L44.70 547.85 L45.75 548.90 L48.13 548.38 L49.10 550.06 L47.46 551.86 L47.84 553.29 L50.16 554.03 L50.16 555.97 L47.84 556.71 L47.46 558.14 L49.10 559.94 L48.13 561.62 L45.75 561.10 L44.70 562.15 L45.22 564.53 L43.54 565.50 L41.74 563.86 L40.31 564.24 L39.57 566.56 L37.63 566.56 L36.89 564.24 L35.46 563.86 L33.66 565.50 L31.98 564.53 L32.50 562.15 L31.45 561.10 L29.07 561.62 L28.10 559.94 L29.74 558.14 L29.36 556.71 L27.04 555.97 L27.04 554.03 L29.36 553.29 L29.74 551.86 L28.10 550.06 L29.07 548.38 L31.45 548.90 L32.50 547.85 L31.98 545.47 L33.66 544.50 L35.46 546.14 L36.89 545.76Z" fill="#000" stroke="#f5f5f5" stroke-width="1.6"/>
<circle cx="38.6" cy="555" r="5.2" fill="#fff"/><rect x="36.4" y="552.8" width="4.4" height="4.4" fill="#000"/>
<path d="M34.4 587.3 Q34.6 580 43 580 Q51.6 580 51.6 586.8 Q51.6 591 46.6 593.5 V597.2 H39.6 V591.2 Q44.6 589.2 44.6 587.2 Q44.6 585.6 43 585.6 Q41.4 585.6 41.4 587.6 Z" fill="#000"/>
<ellipse cx="42.8" cy="602.9" rx="3.8" ry="3" fill="#000"/>
<ellipse cx="43" cy="696" rx="6.25" ry="6.8" fill="#6a6a6a"/>
<path d="M31.6 710.5 Q31.6 705.8 43 705.8 Q54.3 705.8 54.3 710.5 Q54.3 712.8 52 712.8 H34 Q31.6 712.8 31.6 710.5Z" fill="#6a6a6a"/>
<path d="M29.7 738.5 L43 733 L56.3 738.5 V754.6 H50.3 V752.7 H35.8 V754.6 H29.7Z" fill="#6a6a6a"/>
<rect x="36" y="744.8" width="14.4" height="2.2" fill="#f5f5f5"/><rect x="36" y="749" width="14.4" height="2.1" fill="#f5f5f5"/>
<rect x="32.8" y="773.2" width="12.1" height="1.6" fill="#6a6a6a"/>
<rect x="29.3" y="777.1" width="18.7" height="2" fill="#6a6a6a"/>
<path d="M30.5 779 H47 V796.9 H41 V792.7 H36.7 V796.9 H30.5Z" fill="#6a6a6a"/>
<rect x="32.6" y="780.9" width="2" height="2" fill="#f5f5f5"/><rect x="37.1" y="780.9" width="4" height="2" fill="#f5f5f5"/><rect x="43.2" y="780.9" width="2" height="2" fill="#f5f5f5"/>
<rect x="32.6" y="785.1" width="2" height="2" fill="#f5f5f5"/><rect x="37.1" y="785.1" width="4" height="2" fill="#f5f5f5"/><rect x="43.2" y="785.1" width="2" height="2" fill="#f5f5f5"/>
<rect x="32.6" y="789.3" width="2" height="2" fill="#f5f5f5"/><rect x="37.1" y="789.3" width="4" height="2" fill="#f5f5f5"/><rect x="43.2" y="789.3" width="2" height="2" fill="#f5f5f5"/>
<rect x="32.6" y="793.5" width="2" height="2" fill="#f5f5f5"/><rect x="43.2" y="793.5" width="2" height="2" fill="#f5f5f5"/>
<rect x="49.2" y="780.2" width="6.3" height="16.7" fill="#6a6a6a"/>
<rect x="51.3" y="783.8" width="2" height="2" fill="#f5f5f5"/>
<rect x="51.3" y="788" width="2" height="2" fill="#f5f5f5"/>
<rect x="51.3" y="792.2" width="2" height="2" fill="#f5f5f5"/>
<path d="M29.8 824 L43 816 L56.2 824" fill="none" stroke="#6a6a6a" stroke-width="2.2" stroke-linecap="round"/>
<path d="M32 827 L43 819.8 L54.5 827 V837.5 Q54.5 838.8 53.2 838.8 H48 V834.5 A5 5 0 0 0 37.9 834.5 V838.8 H33.3 Q32 838.8 32 837.5Z" fill="#6a6a6a"/>
</svg>
<svg class="ab" style="left:1320px;top:135px" width="112" height="85" viewBox="1320 135 112 85">
<path d="M1335.5 143.6 H1357.5 Q1359.5 143.6 1359.5 145.6 V167.8" fill="none" stroke="#000" stroke-width="1.4"/>
<rect x="1329.1" y="146.6" width="27.8" height="27.8" rx="3" fill="#000"/>
<rect x="1329.1" y="153.9" width="27.8" height="1.6" fill="#e5e5e5"/>
<circle cx="1333.7" cy="150.5" r="1" fill="#e5e5e5"/><circle cx="1337.4" cy="150.5" r="1" fill="#e5e5e5"/>
<rect x="1343.7" y="149.6" width="9.5" height="2" rx="1" fill="#e5e5e5"/>
<path d="M1365.2 156.8 H1371 L1368.1 160Z" fill="#000"/>
<rect x="1388.7" y="149.3" width="29.5" height="19.3" fill="#000"/>
<path d="M1389.6 149.6 L1403.45 162 L1417.3 149.6" fill="none" stroke="#e5e5e5" stroke-width="2"/>
<path d="M1365.5 200.8 H1386.6" stroke="#1a1a1e" stroke-width="4.5" stroke-linecap="round"/>
<path d="M1403 191 L1421.3 210 M1421.3 191 L1403 210" stroke="#000" stroke-width="4.4" stroke-linecap="round"/>
</svg>
</body></html>
